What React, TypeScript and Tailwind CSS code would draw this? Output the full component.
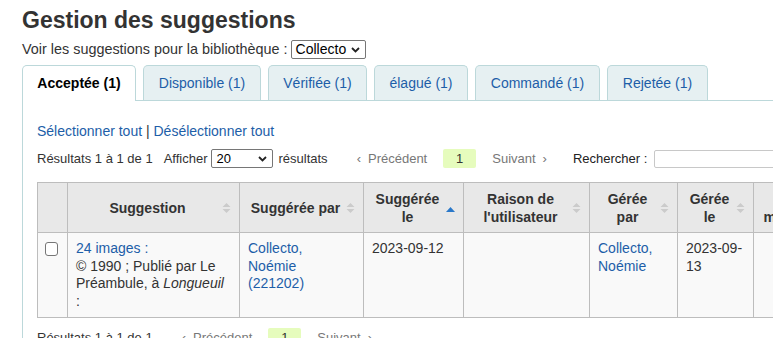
import React from "react";

const LINK = "text-[#1d5ea8]";

const TABS = [
  { label: "Acceptée (1)", w: "w-[114px]", active: true },
  { label: "Disponible (1)", w: "w-[118px]" },
  { label: "Vérifiée (1)", w: "w-[99px]" },
  { label: "élagué (1)", w: "w-[94px]" },
  { label: "Commandé (1)", w: "w-[125px]" },
  { label: "Rejetée (1)", w: "w-[101px]" },
];

function Chevron() {
  return (
    <svg width="9" height="6" viewBox="0 0 9 6" className="shrink-0">
      <path d="M1 1 L4.5 4.5 L8 1" fill="none" stroke="#222" strokeWidth="1.8" />
    </svg>
  );
}

function FakeSelect({ value, width }: { value: string; width: string }) {
  return (
    <div className={`${width} h-[19px] shrink-0 border border-[#767676] rounded-[2px] bg-white flex items-center justify-between pl-[4px] pr-[5px] text-black`}>
      <span>{value}</span>
      <Chevron />
    </div>
  );
}

function SortIcon({ active = false }: { active?: boolean }) {
  if (active)
    return (
      <svg width="9" height="5" viewBox="0 0 9 5" className="absolute right-[8px] top-1/2 -translate-y-[1px]">
        <polygon points="0,5 4.5,0 9,5" fill="#2a78c9" />
      </svg>
    );
  return (
    <svg width="9" height="11" viewBox="0 0 9 11" className="absolute right-[8px] top-1/2 -translate-y-1/2">
      <polygon points="0.5,4.5 4.5,0.5 8.5,4.5" fill="#cbcbcb" />
      <polygon points="0.5,6.5 4.5,10.5 8.5,6.5" fill="#cbcbcb" />
    </svg>
  );
}

function Pager({ showLength }: { showLength?: boolean }) {
  return (
    <div className="flex items-center h-[19px] w-max whitespace-nowrap text-[13px]">
      <span>Résultats 1 à 1 de 1</span>
      {showLength && (
        <div className="flex items-center ml-[11px]">
          <span className="mr-[4px]">Afficher</span>
          <FakeSelect value="20" width="w-[62px]" />
          <span className="ml-[5px]">résultats</span>
        </div>
      )}
      <div className="flex items-center ml-[29px] text-[#777]">
        <span className="mr-[7px]">‹</span>
        <span>Précédent</span>
        <span className="mx-[16px] w-[33px] h-[19px] rounded-[2px] bg-[#e6fcbd] text-[#333] flex items-center justify-center">1</span>
        <span>Suivant</span>
        <span className="ml-[7px]">›</span>
      </div>
      {showLength && (
        <div className="flex items-center ml-[26px]">
          <span className="text-[#222]">Rechercher :</span>
          <div className="ml-[7px] w-[200px] h-[18px] border border-[#c8c8c8] rounded-[2px] bg-white" />
        </div>
      )}
    </div>
  );
}

const HEADERS: { label: React.ReactNode; active?: boolean; pad?: string }[] = [
  { label: "Suggestion" },
  { label: "Suggérée par" },
  { label: <>Suggérée<br />le</>, active: true },
  { label: <>Raison de<br />l'utilisateur</> },
  { label: <>Gérée<br />par</> },
  { label: <>Gérée<br />le</> },
  { label: <>Date de<br />modification</>, pad: "pl-[5px]" },
];

export default function App() {
  return (
    <div className="w-full h-[338px] overflow-hidden bg-white pl-[22px] text-[14px] text-[#333] font-['Liberation_Sans',Arial,sans-serif]">
      <h1 className="pt-[7px] text-[23px] leading-[26px] font-bold text-[#333]">Gestion des suggestions</h1>

      <div className="mt-[7px] flex items-center h-[19px] text-[14.4px]">
        <span>Voir les suggestions pour la bibliothèque :</span>
        <div className="ml-[3px] text-[14px]">
          <FakeSelect value="Collecto" width="w-[75px]" />
        </div>
      </div>

      <ul className="mt-[6px] flex items-end gap-[7px] border-b border-[#bcd8da] w-[1000px]">
        {TABS.map((t) =>
          t.active ? (
            <li key={t.label} className={`${t.w} h-[36px] -mb-px flex items-center justify-center rounded-t-[5px] border border-b-0 border-[#bcd8da] bg-white font-bold text-black`}>
              {t.label}
            </li>
          ) : (
            <li key={t.label} className={`${t.w} h-[35px] flex items-center justify-center rounded-t-[5px] border border-b-0 border-[#bcd8da] bg-[#e6f0f2] ${LINK}`}>
              {t.label}
            </li>
          )
        )}
      </ul>

      <div className="border-l border-[#bcd8da] pl-[14px] pt-[22px] h-[300px]">
        <div className={`leading-[17px] ${LINK}`}>
          Sélectionner tout <span className="text-[#333]">|</span> Désélectionner tout
        </div>

        <div className="mt-[9px]">
          <Pager showLength />
        </div>

        <table className="mt-[14px] table-fixed border-collapse w-[836px]">
          <colgroup>
            <col className="w-[30px]" />
            <col className="w-[172px]" />
            <col className="w-[124px]" />
            <col className="w-[100px]" />
            <col className="w-[126px]" />
            <col className="w-[88px]" />
            <col className="w-[76px]" />
            <col className="w-[120px]" />
          </colgroup>
          <thead>
            <tr className="h-[50px] bg-[#e8e8e8]">
              <th className="border border-[#bdbdbd]" />
              {HEADERS.map((h, i) => (
                <th key={i} className={`relative border border-[#bdbdbd] ${h.pad ?? "pl-[10px]"} pr-[22px] text-center font-bold leading-[18px] text-[#333]`}>
                  {h.label}
                  <SortIcon active={h.active} />
                </th>
              ))}
            </tr>
          </thead>
          <tbody>
            <tr className="bg-[#f9f9f9] align-top leading-[17.5px]">
              <td className="border border-[#bdbdbd] h-[85px]">
                <div className="mt-[9px] ml-[7px] w-[13px] h-[14px] rounded-[3px] border border-[#767676] bg-white" />
              </td>
              <td className="border border-[#bdbdbd] px-[8px] py-[7px]">
                <span className={LINK}>24 images :</span>
                <br />© 1990 ; Publié par Le
                <br />Préambule, à <i>Longueuil</i>
                <br />:
              </td>
              <td className={`border border-[#bdbdbd] px-[8px] py-[7px] ${LINK}`}>
                Collecto,
                <br />Noémie
                <br />(221202)
              </td>
              <td className="border border-[#bdbdbd] px-[8px] py-[7px]">2023-09-12</td>
              <td className="border border-[#bdbdbd] px-[8px] py-[7px]" />
              <td className={`border border-[#bdbdbd] px-[8px] py-[7px] ${LINK}`}>
                Collecto,
                <br />Noémie
              </td>
              <td className="border border-[#bdbdbd] px-[8px] py-[7px]">
                2023-09-
                <br />13
              </td>
              <td className="border border-[#bdbdbd] px-[8px] py-[7px]" />
            </tr>
          </tbody>
        </table>

        <div className="mt-[10px]">
          <Pager />
        </div>
      </div>
    </div>
  );
}
